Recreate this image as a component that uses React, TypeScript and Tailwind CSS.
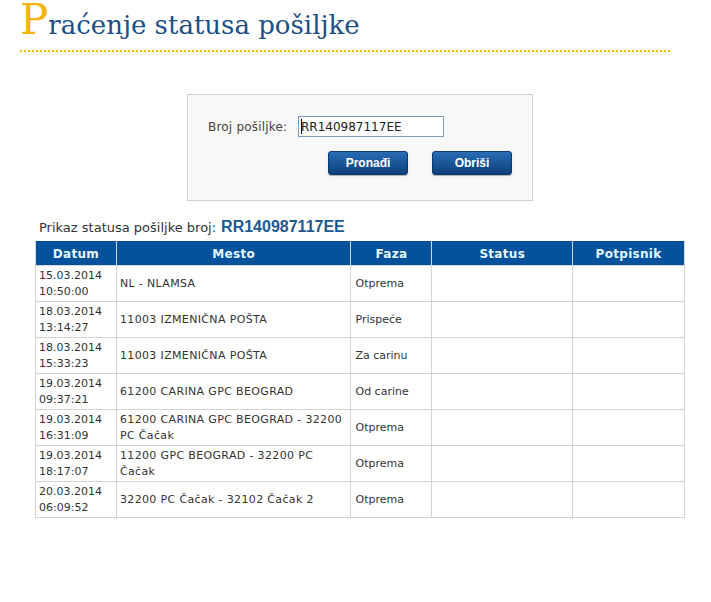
const rows = [
  ["15.03.2014", "10:50:00", "NL - NLAMSA", "Otprema"],
  ["18.03.2014", "13:14:27", "11003 IZMENIČNA POŠTA", "Prispeće"],
  ["18.03.2014", "15:33:23", "11003 IZMENIČNA POŠTA", "Za carinu"],
  ["19.03.2014", "09:37:21", "61200 CARINA GPC BEOGRAD", "Od carine"],
  ["19.03.2014", "16:31:09", "61200 CARINA GPC BEOGRAD - 32200 PC Čačak", "Otprema"],
  ["19.03.2014", "18:17:07", "11200 GPC BEOGRAD - 32200 PC Čačak", "Otprema"],
  ["20.03.2014", "06:09:52", "32200 PC Čačak - 32102 Čačak 2", "Otprema"],
];

const verdana = "font-['DejaVu_Sans',Verdana,sans-serif]";

function Btn({ label }: { label: string }) {
  return (
    <button className="w-[80px] h-[24px] rounded-[3px] bg-gradient-to-b from-[#2a6db4] to-[#0b3f7c] border border-[#0b3a70] text-white text-[12px] font-bold font-['Liberation_Sans',Arial,sans-serif] shadow-[0_1px_1px_rgba(0,0,0,0.3)]">
      {label}
    </button>
  );
}

export default function App() {
  return (
    <div className="w-[711px] h-[602px] bg-white relative">
      <div className="pl-[20px] pt-[2px]">
        <h1 className="w-[650px] h-[48px] flex items-baseline pt-[1px] font-['DejaVu_Serif',serif] text-[#1b4f86] leading-[40px]">
          <span className="text-[42px] text-[#f6b40e] leading-[46px] -mt-[6px]">P</span>
          <span className="text-[26px] leading-[40px]">raćenje statusa pošiljke</span>
        </h1>
        <div className="w-[650px] border-t-2 border-dotted border-[#f5b50a]"></div>
      </div>

      <div className="ml-[187px] mt-[42px] w-[346px] h-[107px] border border-[#cfcfcf] bg-[#f8f8f8]">
        <div className={`flex items-center mt-[21px] ml-[20px] ${verdana}`}>
          <span className="text-[12px] text-[#444] w-[90px] tracking-[0.2px]">Broj pošiljke:</span>
          <div className="w-[146px] h-[21px] border border-[#7f9db9] bg-white flex items-center pl-[2px] text-[12px] text-[#222]">
            <span className="w-px h-[15px] bg-black -mr-px"></span>
            RR140987117EE
          </div>
        </div>
        <div className="flex gap-[24px] ml-[140px] mt-[14px]">
          <Btn label="Pronađi" />
          <Btn label="Obriši" />
        </div>
      </div>

      <div className={`ml-[39px] mt-[14px] flex items-baseline text-[13px] text-[#333] ${verdana}`}>
        <span>Prikaz statusa pošiljke broj:</span>
        <span className="ml-[5px] text-[16px] font-bold text-[#1b5a92] font-['Liberation_Sans',Arial,sans-serif]">RR140987117EE</span>
      </div>

      <table className={`ml-[35px] mt-[2px] w-[650px] border-collapse text-[11px] ${verdana}`}>
        <thead>
          <tr className="bg-[#03529b]">
            {[
              ["Datum", "w-[81px]"],
              ["Mesto", "w-[235px]"],
              ["Faza", "w-[81px]"],
              ["Status", "w-[141px]"],
              ["Potpisnik", "w-[112px]"],
            ].map(([h, w]) => (
              <th key={h} className={`${w} leading-[22px] pt-[2px] text-[12px] font-bold text-[#e6f6ff] border-x border-[#d0d8e4] px-0 pb-0 tracking-[0.3px]`}>
                {h}
              </th>
            ))}
          </tr>
        </thead>
        <tbody>
          {rows.map((r, i) => (
            <tr key={i} className="h-[36px] text-[#333]">
              <td className="border border-[#d4d4d4] px-[3px] leading-[16px] align-middle">
                {r[0]}
                <br />
                {r[1]}
              </td>
              <td className="border border-[#d4d4d4] px-[3px] leading-[16px] align-middle tracking-[0.35px]">{r[2]}</td>
              <td className="border border-[#d4d4d4] px-[4px] leading-[16px] align-middle">{r[3]}</td>
              <td className="border border-[#d4d4d4]"></td>
              <td className="border border-[#d4d4d4]"></td>
            </tr>
          ))}
        </tbody>
      </table>
    </div>
  );
}
